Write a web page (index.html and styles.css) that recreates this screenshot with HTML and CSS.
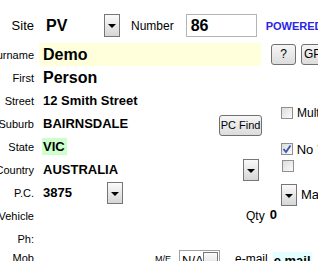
FILE: index.html
```html
<!DOCTYPE html>
<html>
<head>
  <meta charset="utf-8"/>
  <title>Customer Details</title>
  <link rel="stylesheet" href="styles.css">
</head>
<body>

  <!-- ---------- CUSTOMER FORM ---------- -->
  <div class="cust-form">

    <!-- Site + Number -->
    <div class="row row-site">
      <span class="lbl lbl-big">Site</span>
      <div class="val">
        <span class="big site-code">PV</span>
        <span class="drop"></span>
        <span class="num-lbl">Number</span>
        <span class="numbox">86</span>
        <span class="powered">POWERED</span>
      </div>
    </div>

    <!-- Surname -->
    <div class="row row-surname">
      <span class="lbl">Surname</span>
      <div class="val">
        <span class="big surname-box">Demo</span>
        <span class="btn btn-q">?</span>
        <span class="btn btn-gp">GP</span>
      </div>
    </div>

    <div class="row">
      <span class="lbl">First</span>
      <div class="val"><span class="big pad">Person</span></div>
    </div>

    <div class="row">
      <span class="lbl">Street</span>
      <div class="val"><span class="mid pad">12 Smith Street</span></div>
    </div>

    <div class="row">
      <span class="lbl">Suburb</span>
      <div class="val">
        <span class="mid pad suburb-txt">BAIRNSDALE</span>
        <span class="btn btn-pc">PC Find</span>
        <span class="chk chk-mult"></span>
        <span class="side-txt side-mult">Mult</span>
      </div>
    </div>

    <div class="row">
      <span class="lbl">State</span>
      <div class="val">
        <span class="mid state-box">VIC</span>
        <span class="chk chk-on chk-no">
          <svg width="10" height="10" viewBox="0 0 10 10"><path d="M1.5 5 L4 8 L8.5 1.5" fill="none" stroke="#3a56b4" stroke-width="1.8"/></svg>
        </span>
        <span class="side-txt side-no">No <span class="mark">*</span></span>
      </div>
    </div>

    <div class="row">
      <span class="lbl">Country</span>
      <div class="val">
        <span class="mid pad country-txt">AUSTRALIA</span>
        <span class="drop drop-sm"></span>
        <span class="chk chk-country"></span>
      </div>
    </div>

    <div class="row">
      <span class="lbl">P.C.</span>
      <div class="val">
        <span class="mid pad pc-txt">3875</span>
        <span class="drop drop-sm"></span>
        <span class="drop drop-sm drop-ma"></span>
        <span class="side-txt side-ma">Ma</span>
      </div>
    </div>

    <div class="row">
      <span class="lbl">Vehicle</span>
      <div class="val">
        <span class="qty-lbl">Qty</span>
        <span class="mid qty-val">0</span>
      </div>
    </div>

    <div class="row">
      <span class="lbl">Ph:</span>
      <div class="val"></div>
    </div>

    <div class="row row-mob">
      <span class="lbl">Mob</span>
      <div class="val">
        <span class="me-lbl">M/E</span>
        <span class="sel-na">N/A<span class="drop drop-in"></span></span>
        <span class="email-lbl">e-mail</span>
        <span class="mid email-box">e mail</span>
      </div>
    </div>

  </div>

</body>
</html>
```

FILE: styles.css
```css
/* Basic reset */
* {
  box-sizing: border-box;
  margin: 0;
  padding: 0;
}
body {
  font-family: 'Liberation Sans', Arial, sans-serif;
  background: #fff;
  color: #000;
  overflow: hidden;
}

/* ---------- ROWS ---------- */
.cust-form {
  padding-top: 14px;
}
.row {
  display: grid;
  grid-template-columns: 34px 1fr;
  column-gap: 5px;
  align-items: center;
  height: 23px;
  white-space: nowrap;
}
.row-surname {
  margin-top: 6px;
}
.lbl {
  display: flex;
  justify-content: flex-end;   /* long labels spill out to the left */
  font-size: 11px;
}
.lbl-big {
  font-size: 13px;
}
.val {
  display: flex;
  align-items: center;
  height: 23px;
}

/* ---------- VALUES ---------- */
.big {
  font-size: 16px;
  font-weight: bold;
}
.mid {
  font-size: 13px;
  font-weight: bold;
}
.pad {
  padding-left: 4px;
}
.site-code {
  width: 65px;
  padding-left: 7px;
}
.num-lbl {
  font-size: 12px;
  margin-left: 11px;
}
.numbox {
  width: 71px;
  height: 23px;
  margin-left: 12px;
  border: 1px solid #b4b4b4;
  padding: 1px 0 0 4px;
  font-size: 16px;
  font-weight: bold;
  line-height: 20px;
}
.powered {
  margin-left: 9px;
  color: #2a24e8;
  font-size: 11px;
  font-weight: bold;
}
.surname-box {
  width: 222px;
  height: 23px;
  line-height: 23px;
  padding-left: 4px;
  background: #ffffdc;
}
.suburb-txt {
  width: 180px;
}
.country-txt {
  width: 204px;
}
.pc-txt {
  width: 68px;
}
.state-box {
  margin-left: 3px;
  padding: 0 2px 0 1px;
  height: 17px;
  line-height: 17px;
  background: #ccffcc;
}

/* ---------- DROPDOWN ARROWS ---------- */
.drop {
  position: relative;
  display: inline-block;
  width: 16px;
  height: 23px;
  border: 1px solid #767676;
  background: linear-gradient(#fafafa, #d6d6d6);
}
.drop::after {
  content: "";
  position: absolute;
  left: 3px;
  top: 9px;
  border-left: 4px solid transparent;
  border-right: 4px solid transparent;
  border-top: 4px solid #000;
}
.drop-sm {
  width: 16px;
  height: 22px;
}
.drop-ma {
  margin-left: 158px;
  margin-top: 4px;
}

/* ---------- BUTTONS ---------- */
.btn {
  display: inline-block;
  height: 21px;
  border: 1px solid #707070;
  border-radius: 3px;
  background: linear-gradient(#f6f6f6, #dcdcdc);
  font-size: 12px;
  line-height: 19px;
  text-align: center;
}
.btn-q {
  width: 25px;
  margin-left: 10px;
}
.btn-gp {
  width: 30px;
  margin-left: 5px;
  padding-left: 2px;
  text-align: left;
}
.btn-pc {
  width: 43px;
  margin-top: 3px;
  font-size: 11px;
}

/* ---------- CHECKBOXES ---------- */
.chk {
  display: inline-block;
  width: 12px;
  height: 12px;
  border: 1px solid #8e8f8f;
  background: linear-gradient(135deg, #dcdcdc, #fbfbfb);
}
.chk svg {
  display: block;
}
.chk-mult {
  align-self: flex-start;
  margin-left: 19px;
  margin-top: -5px;
}
.chk-no {
  margin-left: 214px;
  margin-top: 5px;
}
.chk-country {
  align-self: flex-start;
  margin-left: 23px;
  margin-top: 2px;
}
.side-txt {
  margin-left: 4px;
  font-size: 12px;
}
.side-mult {
  align-self: flex-start;
  margin-top: -6px;
}
.side-no {
  margin-top: 5px;
  font-size: 13px;
}
.side-ma {
  margin-top: 4px;
  font-size: 13px;
}
.mark {
  color: #f0a030;
  font-size: 9px;
  vertical-align: top;
}

/* ---------- QTY / MOBILE ---------- */
.qty-lbl {
  margin-left: 207px;
  font-size: 12px;
}
.qty-val {
  margin-left: 5px;
  margin-top: -3px;
}
.row-mob {
  align-items: start;
}
.row-mob .lbl {
  padding-top: 2px;
}
.row-mob .val {
  align-items: flex-start;
}
.me-lbl {
  margin-left: 116px;
  margin-top: 4px;
  font-size: 9px;
}
.sel-na {
  position: relative;
  display: inline-block;
  width: 41px;
  height: 23px;
  margin-left: 8px;
  border: 1px solid #a0a0a0;
  padding-left: 2px;
  font-size: 13px;
  line-height: 20px;
}
.drop-in {
  position: absolute;
  right: 1px;
  top: 1px;
  width: 15px;
  height: 19px;
}
.email-lbl {
  margin-left: 15px;
  margin-top: 2px;
  font-size: 12px;
}
.email-box {
  margin-left: 5px;
  margin-top: 2px;
  padding: 0 1px;
  height: 20px;
  line-height: 18px;
  background: #e4ffff;
}
```
